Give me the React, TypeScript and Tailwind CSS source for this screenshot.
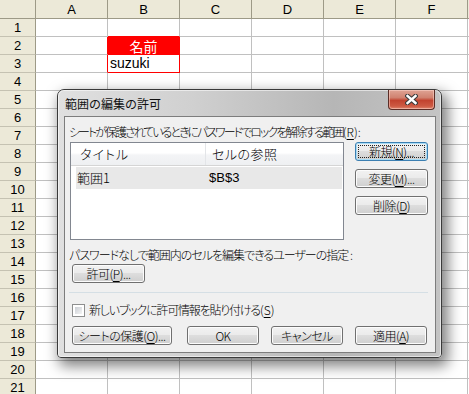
import React, { Fragment } from 'react';

const cols = ['A', 'B', 'C', 'D', 'E', 'F', ''];

function cellClass(r: number, c: string): string {
  if (r === 1 && c === 'B') return 'border-r border-b border-r-[#c0c0c0] border-b-[#ff0000] bg-white';
  if ((r === 2 || r === 3) && c === 'A') return 'border-r border-b border-r-[#ff0000] border-b-[#c0c0c0] bg-white';
  if (r === 2 && c === 'B') return 'border-r border-b border-[#ff0000] bg-[#ff0000] text-white flex items-center justify-center font-["Noto_Sans_CJK_JP",sans-serif] text-[14px] leading-none';
  if (r === 3 && c === 'B') return 'border-r border-b border-[#ff0000] bg-white flex items-center pl-[2px] text-[14px]';
  return 'border-r border-b border-[#c0c0c0] bg-white';
}

function Sheet() {
  const rows = Array.from({ length: 22 }, (_, i) => i + 1);
  return (
    <div className="grid grid-cols-[36px_repeat(7,72px)] grid-rows-[19px_repeat(22,18px)] font-['Liberation_Sans',sans-serif] text-[13px] text-black">
      <div className="bg-[#ece9d8] border-r border-b border-[#9d9a87]" />
      {cols.map((c, i) => (
        <div key={i} className="bg-[#ece9d8] border-r border-b border-[#9d9a87] flex items-center justify-center leading-none">
          {c}
        </div>
      ))}
      {rows.map((r) => (
        <Fragment key={r}>
          <div className="bg-[#ece9d8] border-r border-b border-r-[#9d9a87] border-b-[#c5c2b2] flex items-center justify-center leading-none">
            {r}
          </div>
          {cols.map((c, i) => (
            <div key={i} className={cellClass(r, c)}>
              {r === 2 && c === 'B' ? '名前' : r === 3 && c === 'B' ? 'suzuki' : null}
            </div>
          ))}
        </Fragment>
      ))}
    </div>
  );
}

function Btn({ children, className = '', def = false }: { children: React.ReactNode; className?: string; def?: boolean }) {
  return (
    <div
      className={`relative flex items-center justify-center h-[19px] rounded-[3px] border ${
        def ? 'border-[#3c7fb1] shadow-[inset_0_0_0_1px_#a8dcf6]' : 'border-[#707070] shadow-[inset_0_0_0_1px_#fcfcfc]'
      } bg-[linear-gradient(#f2f2f2_0%,#ebebeb_45%,#dddddd_50%,#cfcfcf_100%)] text-[12px] leading-none text-black tracking-[-0.5px] ${className}`}
    >
      {def && <span className="absolute inset-[2px] border border-dotted border-[#222]" />}
      <span className="relative">{children}</span>
    </div>
  );
}

function U({ children }: { children: React.ReactNode }) {
  return <span className="underline underline-offset-[2px]">{children}</span>;
}

function Dialog() {
  return (
    <div className="absolute left-[57px] top-[89px] w-[385px] h-[269px] rounded-t-[7px] rounded-b-[4px] border border-[#3a3a3a] bg-[linear-gradient(to_right,#e0e0e0,#d0d0d0_35%,#b6b6b6_72%,#c4c4c4)] shadow-[4px_6px_14px_2px_rgba(0,0,0,0.5)] font-['Noto_Sans_CJK_JP',sans-serif]">
      <div className="absolute inset-0 rounded-t-[6px] rounded-b-[3px] shadow-[inset_0_0_0_1px_rgba(255,255,255,0.55)]" />
      <div className="absolute left-[330px] top-0 w-[47px] h-[20px] rounded-b-[4px] border border-t-0 border-[#5b2d26] bg-[linear-gradient(#dfa394_0%,#d08270_40%,#c2432f_55%,#cd5a43_85%,#e0876f_100%)] shadow-[inset_0_0_0_1px_rgba(255,220,210,0.5)] flex items-center justify-center">
        <svg width="13" height="11" viewBox="0 0 13 11">
          <path d="M2.5 2 L10.5 9 M10.5 2 L2.5 9" stroke="#3b3b3b" strokeWidth="4.6" strokeLinecap="square" />
          <path d="M2.5 2 L10.5 9 M10.5 2 L2.5 9" stroke="#ffffff" strokeWidth="2.4" strokeLinecap="square" />
        </svg>
      </div>
      <div className="relative flex flex-col">
        <div className="h-[26px] pl-[7px] pt-[6px] text-[12px] leading-[16px] text-[#111]">範囲の編集の許可</div>
        <div className="ml-[6px] w-[372px] h-[237px] border border-[#7d7d7d] bg-[#f0f0f0] flex flex-col text-[12px] text-black font-light [font-feature-settings:'palt']">
          <div className="mt-[8px] ml-[4px] h-[14px] leading-[14px] whitespace-nowrap">
            <span className="tracking-[-2px]">シートが保護されているときにパスワードでロックを解除する範囲</span>
            <span className="tracking-[0px]">(<U>R</U>):</span>
          </div>
          <div className="mt-[3px] flex">
            <div className="ml-[5px] w-[274px] h-[98px] border border-[#828790] bg-white flex flex-col">
              <div className="h-[23px] flex bg-[linear-gradient(#ffffff_0%,#ffffff_45%,#f3f4f6_55%,#eef0f2_100%)] border-b border-[#d5d5d5] text-[13px]">
                <div className="w-[135px] border-r border-[#e3e5e8] pl-[9px] flex items-center tracking-[1px]">タイトル</div>
                <div className="flex-1 pl-[6px] flex items-center tracking-[0.5px]">セルの参照</div>
              </div>
              <div className="mt-[1px] ml-[5px] mr-[1px] h-[22px] bg-[#e8e8e8] flex items-center text-[13px]">
                <div className="w-[130px] pl-[1px]">範囲1</div>
                <div className="pl-[3px] font-['Liberation_Sans',sans-serif] text-[13px]">$B$3</div>
              </div>
            </div>
            <div className="ml-[11px] flex flex-col gap-[8px]">
              <Btn def className="w-[73px]">新規(<U>N</U>)...</Btn>
              <Btn className="w-[73px]">変更(<U>M</U>)...</Btn>
              <Btn className="w-[73px]">削除(<U>D</U>)</Btn>
            </div>
          </div>
          <div className="mt-[8px] ml-[4px] h-[14px] leading-[14px] whitespace-nowrap tracking-[-1px]">
            パスワードなしで範囲内のセルを編集できるユーザーの指定 :
          </div>
          <div className="mt-[2px] ml-[7px]">
            <Btn className="w-[73px]">許可(<U>P</U>)...</Btn>
          </div>
          <div className="mt-[9px] ml-[4px] w-[359px] h-[1px] bg-[#d5dfe5]" />
          <div className="mt-[10px] ml-[7px] h-[14px] flex items-center gap-[4px]">
            <div className="w-[13px] h-[13px] border border-[#8e8f8f] bg-white p-[2px]">
              <div className="w-full h-full bg-[linear-gradient(135deg,#cbcfd5,#f4f4f4)]" />
            </div>
            <div className="leading-[14px] whitespace-nowrap">
              <span className="tracking-[-1.2px]">新しいブックに許可情報を貼り付ける</span>
              <span>(<U>S</U>)</span>
            </div>
          </div>
          <div className="mt-[9px] ml-[7px] flex">
            <Btn className="w-[100px]">シートの保護(<U>O</U>)...</Btn>
            <Btn className="ml-[15px] w-[72px]">OK</Btn>
            <Btn className="ml-[12px] w-[72px]">キャンセル</Btn>
            <Btn className="ml-[12px] w-[72px]">適用(<U>A</U>)</Btn>
          </div>
        </div>
      </div>
    </div>
  );
}

export default function App() {
  return (
    <div className="relative w-[469px] h-[394px] overflow-hidden bg-white">
      <Sheet />
      <Dialog />
    </div>
  );
}
